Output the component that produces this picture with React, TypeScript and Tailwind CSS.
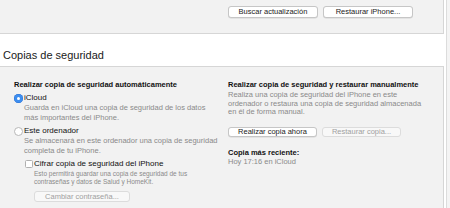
import React from "react";

const font = { fontFamily: '"Liberation Sans", Arial, sans-serif' };

function Btn({ children, disabled, className = "" }: { children: React.ReactNode; disabled?: boolean; className?: string }) {
  return (
    <div
      className={
        "flex items-center justify-center rounded-[3px] border text-[7.5px] leading-none " +
        (disabled
          ? "border-[#dcdcdc] bg-[#f8f8f8] text-[#a0a0a0] "
          : "border-[#c6c6c6] bg-white text-[#222] shadow-[0_0.5px_0.5px_rgba(0,0,0,0.12)] ") +
        className
      }
    >
      {children}
    </div>
  );
}

export default function App() {
  return (
    <div className="flex h-[208px] w-[450px] overflow-hidden bg-white" style={font}>
      <div className="flex w-[446px] flex-col">
        <div className="flex h-[34px] w-[444px] shrink-0 gap-[5px] border-b border-r border-[#d6d6d6] bg-[#f2f2f2] pl-[228px] pt-[6px]">
          <Btn className="h-[12px] w-[90px]">Buscar actualización</Btn>
          <Btn className="h-[12px] w-[90px]">Restaurar iPhone...</Btn>
        </div>
        <div className="h-[32px] shrink-0 pl-[3px] pt-[15px] text-[11px] leading-[13px] text-[#1a1a1a]">
          Copias de seguridad
        </div>
        <div className="flex w-[444px] flex-1 border-r border-t border-[#d6d6d6] bg-[#f2f2f2]">
          <div className="flex w-[214px] flex-col pl-[14px] pt-[13px]">
            <div className="text-[7.5px] font-bold leading-[10px] text-[#111]">
              Realizar copia de seguridad automáticamente
            </div>
            <div className="mt-[3px] flex items-center gap-[1px]">
              <div className="flex h-[9px] w-[9px] items-center justify-center rounded-full bg-[#3d8ef0] shadow-[inset_0_0_0_0.5px_#2a6fd0]">
                <div className="h-[3px] w-[3px] rounded-full bg-white" />
              </div>
              <div className="text-[8px] leading-[10px] text-[#111]">iCloud</div>
            </div>
            <div className="pl-[10px] text-[7.5px] leading-[10px] text-[#8a8a8a]">
              Guarda en iCloud una copia de seguridad de los datos
              <br />
              más importantes del iPhone.
            </div>
            <div className="mt-[3px] flex items-center gap-[1px]">
              <div className="h-[9px] w-[9px] rounded-full border border-[#b8b8b8] bg-white" />
              <div className="text-[8px] leading-[10px] text-[#111]">Este ordenador</div>
            </div>
            <div className="pl-[10px] text-[7.5px] leading-[9.5px] text-[#8a8a8a] whitespace-nowrap">
              Se almacenará en este ordenador una copia de seguridad
              <br />
              completa de tu iPhone.
            </div>
            <div className="mt-[4px] flex items-center gap-[1px] pl-[11px]">
              <div className="h-[8px] w-[8px] rounded-[1.5px] border border-[#b0b0b0] bg-white" />
              <div className="text-[8px] leading-[10px] text-[#111]">Cifrar copia de seguridad del iPhone</div>
            </div>
            <div className="pl-[20px] pt-[1px] text-[6.5px] leading-[8px] text-[#8a8a8a]">
              Esto permitirá guardar una copia de seguridad de tus
              <br />
              contraseñas y datos de Salud y HomeKit.
            </div>
            <div className="pl-[20px] pt-[5px]">
              <Btn disabled className="h-[11px] w-[96px]">Cambiar contraseña...</Btn>
            </div>
          </div>
          <div className="flex flex-col pl-[14px] pt-[13px]">
            <div className="text-[7.5px] font-bold leading-[10px] text-[#111]">
              Realizar copia de seguridad y restaurar manualmente
            </div>
            <div className="mt-[1px] text-[7.5px] leading-[8.5px] text-[#8a8a8a]">
              Realiza una copia de seguridad del iPhone en este
              <br />
              ordenador o restaura una copia de seguridad almacenada
              <br />
              en él de forma manual.
            </div>
            <div className="mt-[10px] flex gap-[5px]">
              <Btn className="h-[10px] w-[89px]">Realizar copia ahora</Btn>
              <Btn disabled className="h-[10px] w-[79px]">Restaurar copia...</Btn>
            </div>
            <div className="mt-[11px] text-[7.5px] font-bold leading-[9px] text-[#111]">Copia más reciente:</div>
            <div className="text-[7.5px] leading-[9px] text-[#8a8a8a]">Hoy 17:16 en iCloud</div>
          </div>
        </div>
      </div>
      <div className="h-full w-[4px] border-l border-[#dcdcdc] bg-[#f4f4f4]" />
    </div>
  );
}
